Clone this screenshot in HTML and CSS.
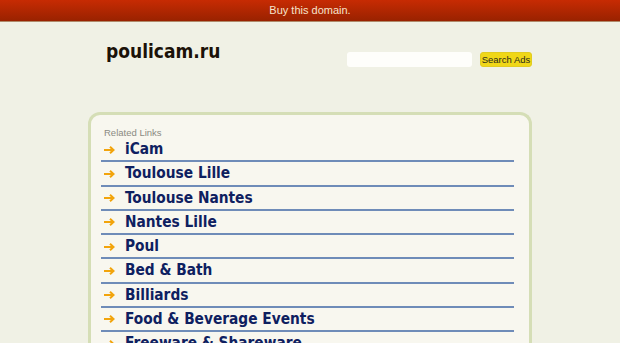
FILE: index.html
```html
<!DOCTYPE html>
<html>
<head>
<meta charset="utf-8">
<link rel="stylesheet" href="styles.css">
</head>
<body>
<div class="topbar"><a href="#">Buy this domain.</a></div>
<div class="header">
  <div class="title">poulicam.ru</div>
  <form class="search">
    <input class="search-input" type="text">
    <button class="search-btn" type="button">Search Ads</button>
  </form>
</div>
<div class="box">
  <div class="related">Related Links</div>
  <ul class="links">
    <li><svg class="arrow" width="11" height="8" viewBox="0 0 11 8"><path d="M0 4H9.5M6 0.8L9.5 4L6 7.2" fill="none" stroke="#f2a40c" stroke-width="2"/></svg><a href="#">iCam</a></li>
    <li><svg class="arrow" width="11" height="8" viewBox="0 0 11 8"><path d="M0 4H9.5M6 0.8L9.5 4L6 7.2" fill="none" stroke="#f2a40c" stroke-width="2"/></svg><a href="#">Toulouse Lille</a></li>
    <li><svg class="arrow" width="11" height="8" viewBox="0 0 11 8"><path d="M0 4H9.5M6 0.8L9.5 4L6 7.2" fill="none" stroke="#f2a40c" stroke-width="2"/></svg><a href="#">Toulouse Nantes</a></li>
    <li><svg class="arrow" width="11" height="8" viewBox="0 0 11 8"><path d="M0 4H9.5M6 0.8L9.5 4L6 7.2" fill="none" stroke="#f2a40c" stroke-width="2"/></svg><a href="#">Nantes Lille</a></li>
    <li><svg class="arrow" width="11" height="8" viewBox="0 0 11 8"><path d="M0 4H9.5M6 0.8L9.5 4L6 7.2" fill="none" stroke="#f2a40c" stroke-width="2"/></svg><a href="#">Poul</a></li>
    <li><svg class="arrow" width="11" height="8" viewBox="0 0 11 8"><path d="M0 4H9.5M6 0.8L9.5 4L6 7.2" fill="none" stroke="#f2a40c" stroke-width="2"/></svg><a href="#">Bed &amp; Bath</a></li>
    <li><svg class="arrow" width="11" height="8" viewBox="0 0 11 8"><path d="M0 4H9.5M6 0.8L9.5 4L6 7.2" fill="none" stroke="#f2a40c" stroke-width="2"/></svg><a href="#">Billiards</a></li>
    <li><svg class="arrow" width="11" height="8" viewBox="0 0 11 8"><path d="M0 4H9.5M6 0.8L9.5 4L6 7.2" fill="none" stroke="#f2a40c" stroke-width="2"/></svg><a href="#">Food &amp; Beverage Events</a></li>
    <li><svg class="arrow" width="11" height="8" viewBox="0 0 11 8"><path d="M0 4H9.5M6 0.8L9.5 4L6 7.2" fill="none" stroke="#f2a40c" stroke-width="2"/></svg><a href="#">Freeware &amp; Shareware</a></li>
  </ul>
</div>
</body>
</html>
```
FILE: styles.css
```css
html, body {
  margin: 0;
  padding: 0;
  background: #f0f1e5;
  font-family: "DejaVu Sans Condensed", "DejaVu Sans", Verdana, sans-serif;
  overflow: hidden;
  height: 343px;
}
.topbar {
  height: 21px;
  background: linear-gradient(#c72b03, #992200);
  border-bottom: 1px solid #b08a6a;
  text-align: center;
  font-family: "Liberation Sans", Arial, sans-serif;
  font-size: 11px;
  line-height: 21px;
}
.topbar a {
  color: #f6e4cc;
  text-decoration: none;
}
.header {
  display: flex;
  align-items: flex-start;
  height: 90px;
  padding: 0 88px 0 106px;
}
.title {
  margin-top: 17px;
  font-size: 19px;
  font-weight: bold;
  color: #1b1208;
  line-height: 24px;
  flex: 1;
}
.search {
  display: flex;
  gap: 8px;
  margin: 30px 0 0 0;
}
.search-input {
  width: 125px;
  height: 15px;
  box-sizing: border-box;
  border: none;
  border-radius: 3px;
  background: #fefefb;
  padding: 0;
  margin: 0;
}
.search-btn {
  width: 52px;
  height: 15px;
  box-sizing: border-box;
  border: 1px solid #e2cc20;
  border-radius: 3px;
  background: #f0d718;
  color: #2a2a18;
  font-family: "Liberation Sans", Arial, sans-serif;
  font-size: 9.5px;
  padding: 0;
  margin: 0;
  line-height: 13px;
}
.box {
  margin: 0 0 0 88px;
  width: 444px;
  box-sizing: border-box;
  border: 3px solid #d5deb6;
  border-bottom: none;
  border-radius: 12px 12px 0 0;
  background: #f8f7ef;
  padding: 13px 15px 0 10px;
  height: 231px;
  overflow: hidden;
}
.related {
  font-family: "Liberation Sans", Arial, sans-serif;
  font-size: 9.5px;
  color: #8a8a82;
  padding-left: 3px;
  line-height: 10px;
}
.links {
  list-style: none;
  margin: 0;
  padding: 0;
}
.links li {
  display: flex;
  align-items: center;
  height: 22.25px;
  border-bottom: 2px solid #6f8cb8;
}
.arrow {
  margin: 1px 10px 0 3px;
  flex: none;
}
.links a {
  color: #0e2060;
  font-weight: bold;
  font-size: 15.3px;
  text-decoration: none;
}
```
